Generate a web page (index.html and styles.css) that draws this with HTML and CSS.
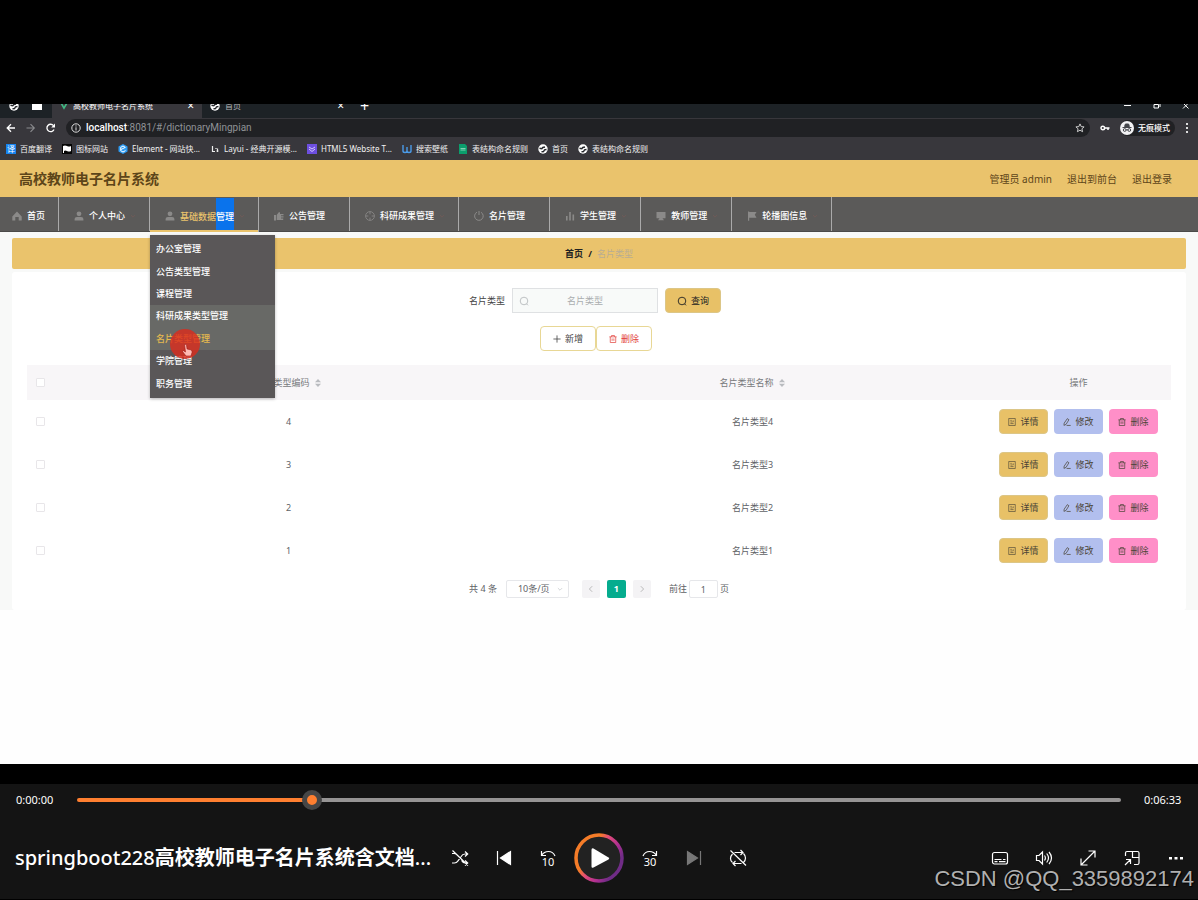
FILE: index.html
```html
<!DOCTYPE html>
<html lang="zh-CN">
<head>
<meta charset="utf-8">
<title>高校教师电子名片系统</title>
<link rel="stylesheet" href="styles.css">
</head>
<body>
<svg class="sprite" aria-hidden="true">
  <symbol id="globe" viewBox="0 0 10 10"><circle cx="5" cy="5" r="4.7" fill="#fff"/><path d="M1.500 4.200l2.300 .6 1-1.300 2.200-.5M8.500 5.500l-2 .3-1 1.700-2 .3" fill="none" stroke="#26282c" stroke-width="1.400"/></symbol>
  <symbol id="user" viewBox="0 0 10 10"><circle cx="5" cy="2.8" r="2.4"/><path d="M.6 9.4V8q0-2 2.4-2h4q2.4 0 2.4 2v1.4z"/></symbol>
  <symbol id="search" viewBox="0 0 10 10"><path d="M5 1.2a3.8 3.8 0 1 0 0 7.6a3.8 3.8 0 0 0 0-7.6M7.500 7.800L9 9.300" fill="none" stroke="currentColor" stroke-width=".9"/></symbol>
  <symbol id="trash" viewBox="0 0 10 10"><path d="M.5 2.300h9M3.200 2.300V.6h3.600v1.700M1.600 2.300v7.100h6.800v-7.100M3.900 4.300v3M6.100 4.300v3" fill="none" stroke="currentColor" stroke-width=".9"/></symbol>
  <symbol id="doc" viewBox="0 0 10 10"><path d="M.9.6h8.200v8.800H.9zM3 3h1.600M3 5h2.600M3 7h4M6.500 5.200V3" fill="none" stroke="currentColor" stroke-width=".8"/></symbol>
  <symbol id="edit" viewBox="0 0 10 10"><path d="M5.400.8l2 1.400L3.800 8 1.200 9.200l.3-2.800zM4.500 9.300h5.100" fill="none" stroke="currentColor" stroke-width=".9"/></symbol>
  <symbol id="down" viewBox="0 0 10 10"><path d="M1.500 3.500L5 7l3.500-3.500" fill="none" stroke="currentColor"/></symbol>
  <symbol id="sort" viewBox="0 0 10 10"><path d="M5 0L8.800 4H1.200zM5 10L1.200 6h7.600z"/></symbol>
</svg>

<main class="screen">
  <div class="tabs">
    <div class="tabs-inner">
      <span class="pin"><svg class="i10"><use href="#globe"/></svg></span>
      <span class="pin"><svg class="i10" viewBox="0 0 10 10"><path d="M0 1h10v8H0z" fill="#fff"/></svg></span>
      <div class="tab tab-on"><svg class="i8" viewBox="0 0 10 10"><path d="M0 1h2.4L5 5.6 7.600 1H10L5 9.600z" fill="#41b883"/></svg><span>高校教师电子名片系统</span><button class="tab-x" aria-label="关闭">×</button></div>
      <div class="tab"><svg class="i10"><use href="#globe"/></svg><span class="dim">首页</span><button class="tab-x" aria-label="关闭">×</button></div>
      <button class="tab-new" aria-label="新标签页">+</button>
      <svg class="win" viewBox="0 0 66 10"><path d="M0 4.500h7M30 3.500h4.500V7H30zM31.500 3V2H36v4M59 2l5.500 5.500M64.500 2L59 7.500" fill="none" stroke="#fff"/></svg>
    </div>
  </div>
  <div class="toolbar">
    <svg class="nav-arrows" viewBox="0 0 50 10"><path d="M9 5H1.500M5 1.200L1.200 5 5 8.800" fill="none" stroke="#fff" stroke-width="1.300"/><path d="M20.500 5H28M24.500 1.200L28.300 5l-3.800 3.800" fill="none" stroke="#8a8b8e" stroke-width="1.100"/><path d="M48 6.500A3.700 3.700 0 1 1 47.500 2.600" fill="none" stroke="#fff" stroke-width="1.300"/><path d="M49 .6V4.400h-3.800z" fill="#fff"/></svg>
    <div class="address">
      <svg class="i10" viewBox="0 0 10 10"><circle cx="5" cy="5" r="4.200" fill="none" stroke="#ddd"/><path d="M5 4.300V7.500M5 2.400v1.100" stroke="#ddd"/></svg>
      <span class="url"><b>localhost</b>:8081/#/dictionaryMingpian</span>
      <svg class="i10" viewBox="0 0 10 10"><path d="M5 .9l1.200 2.700 2.900.3-2.200 1.900.7 2.900L5 7.200 2.400 8.700l.7-2.900L.9 3.900l2.900-.3z" fill="none" stroke="#ddd" stroke-width=".9"/></svg>
    </div>
    <svg class="i10" viewBox="0 0 10 10"><circle cx="2.800" cy="5" r="1.800" fill="none" stroke="#fff" stroke-width="1.400"/><path d="M4.500 5h5M8 5v2" stroke="#fff" stroke-width="1.500"/></svg>
    <div class="incognito"><svg class="i14" viewBox="0 0 14 14"><circle cx="7" cy="7" r="7" fill="#f2f2f4"/><path d="M4.600 5.500L5.400 3h3.200l.8 2.500zM2.500 6.500h9" stroke="#44464b" fill="#44464b"/><path d="M3.300 9a1.400 1.400 0 1 0 2.800 0a1.400 1.400 0 1 0-2.800 0M7.900 9a1.400 1.400 0 1 0 2.800 0a1.400 1.400 0 1 0-2.800 0M6.100 8.800h1.800" fill="none" stroke="#44464b"/></svg><span>无痕模式</span></div>
    <svg class="dots" viewBox="0 0 4 10"><path d="M1 0h2v2H1zM1 4h2v2H1zM1 8h2v2H1z" fill="#ddd"/></svg>
  </div>
  <nav class="bookmarks">
    <a href="#"><span class="fav fav-blue">译</span>百度翻译</a>
    <a href="#"><svg class="i10" viewBox="0 0 10 10"><path d="M0 0h10v10H0z" fill="#050505"/><path d="M1 2q2-1 4 0t4 0v5q-2 1-4 0T2 7v2H1z" fill="#fff"/></svg>图标网站</a>
    <a href="#"><svg class="i10" viewBox="0 0 10 10"><path d="M5 0l4.500 2.500v5L5 10 .5 7.500v-5z" fill="#2d9cf4"/><path d="M7.500 3.500L5 2 2.700 3.400v3.300L5 8l2.500-1.400M3 5.500l4-2" fill="none" stroke="#fff"/></svg>Element - 网站快...</a>
    <a href="#"><svg class="i10" viewBox="0 0 10 10"><path d="M2.500 2v5.500H5M6 4v1M6.500 7h2M7.500 4.500V8" fill="none" stroke="#eee" stroke-width="1.200"/></svg>Layui - 经典开源模...</a>
    <a href="#"><svg class="i10" viewBox="0 0 10 10"><path d="M0 0h10v10H0z" fill="#6d4fe0"/><path d="M2 3l3 2 3-2M2 5l3 2.500L8 5" fill="none" stroke="#d5c9ff"/></svg>HTML5 Website T...</a>
    <a href="#"><svg class="i10" viewBox="0 0 10 10"><path d="M1 1v6q0 1.500 2 1.500T5 7V3v4q0 1.500 2 1.500T9 7V1" fill="none" stroke="#4b9be8" stroke-width="1.400"/></svg>搜索壁纸</a>
    <a href="#"><svg class="i10" viewBox="0 0 10 10"><path d="M1 0h6l2 2v8H1z" fill="#0b9d6c"/><path d="M2.500 6h5M2.500 4.500h5" stroke="#9fe0c5" stroke-width=".8"/></svg>表结构命名规则</a>
    <a href="#"><svg class="i10"><use href="#globe"/></svg>首页</a>
    <a href="#"><svg class="i10"><use href="#globe"/></svg>表结构命名规则</a>
  </nav>

  <header class="app-head">
    <h1>高校教师电子名片系统</h1>
    <div class="account"><span>管理员 admin</span><a href="#">退出到前台</a><a href="#">退出登录</a></div>
  </header>

  <nav class="menu">
    <a class="mi mi-home" href="#"><svg class="i10" viewBox="0 0 10 10"><path d="M5 .5L.3 5.500V9.500h3V6h3.400v3.500h3v-4z"/></svg>首页</a>
    <a class="mi" href="#"><svg class="i10"><use href="#user"/></svg>个人中心<svg class="i6"><use href="#down"/></svg></a>
    <div class="mi mi-on">
      <svg class="i10"><use href="#user"/></svg><span>基础数据<span class="picked">管理</span></span><svg class="i6"><use href="#down"/></svg>
      <div class="drop">
        <a href="#">办公室管理</a><a href="#">公告类型管理</a><a href="#">课程管理</a><a class="lit" href="#">科研成果类型管理</a><a class="lit cur" href="#">名片类型管理</a><a href="#">学院管理</a><a href="#">职务管理</a>
        <svg class="pointer" viewBox="0 0 30 30"><circle cx="15" cy="15" r="15" fill="#dc2a1c" fill-opacity=".8"/><path d="M14.500 15.500q1.500-.6 2 .8l.6 3.700 3.400.8q2 .6 1.600 2.400L21 27h-5l-3.500-4.500 1-.8 2 1.300z" fill="#ffb9b3" stroke="#9c1a12" stroke-width=".6"/></svg>
      </div>
    </div>
    <a class="mi" href="#"><svg class="i10" viewBox="0 0 10 10"><path d="M0 4h2v5.500H0zM2.700 4L5 1l1 .5V3h3.500v1.200H7v1h2.500v1.300H7v1h2.200v1.500H2.700z"/></svg>公告管理<svg class="i6"></svg></a>
    <a class="mi" href="#"><svg class="i10" viewBox="0 0 12 12"><circle cx="6" cy="6" r="5.300" fill="none" stroke="currentColor"/><path d="M6 1v3M6 8v3M1 6h3M8 6h3" stroke="currentColor"/></svg>科研成果管理<svg class="i6"><use href="#down"/></svg></a>
    <a class="mi" href="#"><svg class="i10" viewBox="0 0 10 10"><path d="M7 1.300A4.300 4.300 0 1 1 3 1.200M5 0v4" fill="none" stroke="currentColor"/></svg>名片管理<svg class="i6"></svg></a>
    <a class="mi" href="#"><svg class="i10" viewBox="0 0 10 10"><path d="M1 5h1.600v4.500H1zM4.200 1h1.600v8.500H4.200zM7.500 3.500h1.600v6H7.500z"/></svg>学生管理<svg class="i6"><use href="#down"/></svg></a>
    <a class="mi" href="#"><svg class="i10" viewBox="0 0 10 10"><path d="M.5 1h9v6.200h-3L8 9.200H2l1.500-2h-3z"/></svg>教师管理<svg class="i6"><use href="#down"/></svg></a>
    <a class="mi" href="#"><svg class="i10" viewBox="0 0 10 10"><path d="M1 .5h1.200V1H9.500L7.800 3.800 9.500 6.700H2.200v3H1z"/></svg>轮播图信息<svg class="i6"><use href="#down"/></svg></a>
  </nav>

  <section class="page">
    <div class="crumb"><b>首页</b><b>/</b><span>名片类型</span></div>
    <div class="card">
      <form class="query">
        <label for="type">名片类型</label>
        <div class="field"><svg class="i10"><use href="#search"/></svg><input id="type" type="text" placeholder="名片类型"></div>
        <button type="button" class="btn gold"><svg class="i10"><use href="#search"/></svg>查询</button>
      </form>
      <div class="ops">
        <button class="btn line"><svg class="i8" viewBox="0 0 10 10"><path d="M5 .5v9M.5 5h9" stroke="currentColor"/></svg>新增</button>
        <button class="btn line red"><svg class="i8"><use href="#trash"/></svg>删除</button>
      </div>
      <table class="grid">
        <thead><tr><th class="c-check"><input type="checkbox" aria-label="全选"></th><th class="c-code">名片类型编码<svg class="i8 sort"><use href="#sort"/></svg></th><th>名片类型名称<svg class="i8 sort"><use href="#sort"/></svg></th><th class="c-act">操作</th></tr></thead>
        <tbody>
          <tr><td><input type="checkbox" aria-label="选择4"></td><td>4</td><td>名片类型4</td><td class="c-act"><div class="acts"><button class="btn gold"><svg class="i8"><use href="#doc"/></svg>详情</button><button class="btn blue"><svg class="i8"><use href="#edit"/></svg>修改</button><button class="btn pink"><svg class="i8"><use href="#trash"/></svg>删除</button></div></td></tr>
          <tr><td><input type="checkbox" aria-label="选择3"></td><td>3</td><td>名片类型3</td><td class="c-act"><div class="acts"><button class="btn gold"><svg class="i8"><use href="#doc"/></svg>详情</button><button class="btn blue"><svg class="i8"><use href="#edit"/></svg>修改</button><button class="btn pink"><svg class="i8"><use href="#trash"/></svg>删除</button></div></td></tr>
          <tr><td><input type="checkbox" aria-label="选择2"></td><td>2</td><td>名片类型2</td><td class="c-act"><div class="acts"><button class="btn gold"><svg class="i8"><use href="#doc"/></svg>详情</button><button class="btn blue"><svg class="i8"><use href="#edit"/></svg>修改</button><button class="btn pink"><svg class="i8"><use href="#trash"/></svg>删除</button></div></td></tr>
          <tr><td><input type="checkbox" aria-label="选择1"></td><td>1</td><td>名片类型1</td><td class="c-act"><div class="acts"><button class="btn gold"><svg class="i8"><use href="#doc"/></svg>详情</button><button class="btn blue"><svg class="i8"><use href="#edit"/></svg>修改</button><button class="btn pink"><svg class="i8"><use href="#trash"/></svg>删除</button></div></td></tr>
        </tbody>
      </table>
      <div class="pager">
        <span>共 4 条</span>
        <div class="size"><select aria-label="每页条数"><option>10条/页</option></select><svg class="i6"><use href="#down"/></svg></div>
        <div class="pages">
          <button class="pg" aria-label="上一页"><svg class="i8" viewBox="0 0 10 10"><path d="M6.500 1.500L3 5l3.500 3.500" fill="none" stroke="currentColor"/></svg></button>
          <button class="pg pg-on">1</button>
          <button class="pg" aria-label="下一页"><svg class="i8" viewBox="0 0 10 10"><path d="M3.500 1.500L7 5 3.500 8.500" fill="none" stroke="currentColor"/></svg></button>
        </div>
        <label class="jump">前往<input type="text" value="1">页</label>
      </div>
    </div>
  </section>
</main>

<footer class="player">
  <div class="seek"><span>0:00:00</span><input type="range" min="0" max="1000" value="220" aria-label="进度"><span>0:06:33</span></div>
  <div class="controls">
    <div class="title">springboot228<b>高校教师电子名片系统含文档</b>...</div>
    <div class="group">
      <button aria-label="随机"><svg class="i18" viewBox="0 0 18 18"><path d="M1 14h2.500q2 0 3.500-2.200l3-4Q11.500 5 14 5h2.500M1 4.500h2.200q1.800 0 3.300 1.800M10.500 11.500Q12 14 14 14h2.500M14 2.500L16.700 5 14 7.500M14 11.500l2.700 2.500-2.700 2.500M1.500 1.500l15.500 15"/></svg></button>
      <button aria-label="上一个"><svg class="i18" viewBox="0 0 18 18"><path d="M2.500 2v14"/><path d="M15.500 2.500v13L5.500 9z" fill="#fff"/></svg></button>
      <button aria-label="后退10秒"><svg class="i18" viewBox="0 0 18 18"><path d="M2.500 2v4.500H7M2.700 6.300Q5 2.500 9.500 2.500q4.500 0 6.500 4.500"/><text x="9" y="16.500">10</text></svg></button>
      <button class="play" aria-label="播放"><svg viewBox="0 0 50 50"><defs><linearGradient id="ring" x1="0" y1="0.200" x2="1" y2="0.800"><stop offset=".3" stop-color="#f57c28"/><stop offset=".45" stop-color="#e34c78"/><stop offset=".68" stop-color="#ad2e92"/><stop offset=".85" stop-color="#702c86"/></linearGradient></defs><circle cx="25" cy="25" r="23" fill="#222" stroke="url(#ring)" stroke-width="3.500"/><path d="M17.500 17v16.500q0 2 2 1L34.500 26.500q1.500-1 0-2L19.500 15.500q-2-1-2 1.500z" fill="#fff" stroke="none"/></svg></button>
      <button aria-label="前进30秒"><svg class="i18" viewBox="0 0 18 18"><path d="M15.500 2v4.500H11M15.300 6.300Q13 2.500 8.500 2.500 4 2.500 2 7"/><text x="9" y="16.500">30</text></svg></button>
      <button aria-label="下一个"><svg class="i18 off" viewBox="0 0 18 18"><path d="M15.500 2v14"/><path d="M2.500 2.500v13l10-6.500z" fill="#777"/></svg></button>
      <button aria-label="循环"><svg class="i18" viewBox="0 0 18 18"><path d="M5.500 3.500H14M11.500 1L14 3.500 11.500 6M12.500 14.500H4M6.500 12L4 14.500 6.500 17M3.500 5Q1.500 7 1.500 9.500t2 4M14.500 4.500q2 2 2 4.500t-2 4.500M1.500 1.500l15.500 15"/></svg></button>
    </div>
    <div class="group end">
      <button aria-label="字幕"><svg class="i18" viewBox="0 0 18 18"><rect x="1.500" y="3.500" width="15" height="11.500" rx="2"/><path d="M3.500 10.500h7M12 10.500h2.500M3.500 12.700h3M8 12.700h6.500"/></svg></button>
      <button aria-label="音量"><svg class="i18" viewBox="0 0 18 18"><path d="M1.500 6.500h2.500L7.500 3v12L4 11.500H1.500zM9.500 6.500q1.800 2.500 0 5M11.700 4.500q3.600 4.500 0 9M14 3q5 6 0 12"/></svg></button>
      <button aria-label="全屏"><svg class="i18" viewBox="0 0 18 18"><path d="M2.500 15.500l13.500-13.500M9.500 2H16v6.500M2 9.500V16h6.500"/></svg></button>
      <button aria-label="小窗"><svg class="i18" viewBox="0 0 18 18"><path d="M2.500 7V4q0-1.500 1.500-1.500h10.500q1.500 0 1.500 1.500v10q0 1.500-1.500 1.500H11M9.500 2.500v6H16M2 16l5.500-5.500M3 10.500h4.500V15"/></svg></button>
      <button aria-label="更多"><svg class="i18" viewBox="0 0 18 18"><path d="M2 8h3v2.500H2zM7.500 8h3v2.500h-3zM13 8h3v2.500h-3z" fill="#fff" stroke="none"/></svg></button>
    </div>
  </div>
  <span class="mark">CSDN @QQ_3359892174</span>
</footer>
</body>
</html>
```
FILE: styles.css
```css
* { box-sizing: border-box; }
body { margin: 0; min-height: 100vh; display: flex; flex-direction: column; padding-top: 104px; background: #000; font: 9px/14px "Noto Sans", "Noto Sans CJK SC", sans-serif; color: #606266; }
a { color: inherit; text-decoration: none; }
button, input, select { font: inherit; color: inherit; margin: 0; padding: 0; border: 0; background: none; }
svg { flex: none; fill: currentColor; }
.sprite { position: absolute; width: 0; height: 0; }
.i6 { width: 6px; height: 6px; }
.i8 { width: 8px; height: 8px; }
.i10 { width: 10px; height: 10px; }
.i14 { width: 14px; height: 14px; }
.i18 { width: 18px; height: 18px; }

.screen { flex: 1; margin-bottom: 20px; background: #fefefe; }

/* browser chrome */
.tabs { height: 14px; overflow: hidden; display: flex; align-items: flex-end; background: #1d2226; color: #fff; font-size: 8px; line-height: 10px; }
.tabs-inner { flex: 1; display: flex; align-items: center; height: 24px; }
.pin { width: 25px; display: flex; justify-content: center; margin-left: 1px; }
.pin + .pin { margin: 0 3px 0 -2px; }
.tab { display: flex; align-items: center; height: 24px; width: 150px; padding: 0 8px; gap: 5px; }
.tab-on { background: #38373c; }
.tab span { flex: 1; white-space: nowrap; }
.tab-x { font-size: 12px; }
.tab-new { font-size: 16px; margin-left: 8px; }
.dim { color: #b0b2b5; }
.win { width: 66px; height: 10px; margin: 0 8px 0 auto; }
.toolbar { height: 20px; display: flex; align-items: center; padding: 0 9px 0 6px; gap: 10px; background: #38373c; color: #fff; }
.nav-arrows { width: 50px; height: 10px; }
.address { flex: 1; height: 18px; border-radius: 9px; background: #202124; display: flex; align-items: center; gap: 5px; padding: 0 5px; }
.url { flex: 1; font-family: Roboto, "Noto Sans", sans-serif; font-size: 10px; color: #8f9296; }
.url b { font-weight: 500; color: #fff; }
.incognito { display: flex; align-items: center; gap: 4px; width: 55px; height: 16px; border-radius: 8px; background: #202124; font-size: 8px; font-weight: 500; white-space: nowrap; }
.dots { width: 4px; height: 10px; }
.bookmarks { height: 22px; display: flex; align-items: center; gap: 10px; padding: 0 6px; background: #38373c; color: #f1f1f1; font-size: 8px; white-space: nowrap; }
.bookmarks a { display: flex; align-items: center; gap: 4px; }
.fav { width: 10px; line-height: 10px; text-align: center; }
.fav-blue { background: #1684f0; color: #fff; }

/* application header */
.app-head { height: 37px; display: flex; align-items: center; justify-content: space-between; padding: 0 26px 0 19px; background: #eac36c; color: #5d4519; }
.app-head h1 { margin: 0; font-size: 14px; line-height: 20px; font-weight: 600; }
.account { display: flex; gap: 15px; font-size: 10px; }
.menu { height: 35px; display: flex; background: #5b5a59; color: #fff; font-weight: 500; border-bottom: 1px solid #4b4a49; }
.mi { position: relative; display: flex; align-items: center; gap: 5px; padding: 3px 13px 0 15px; border-right: 1px solid #aaa; line-height: 31px; }
.mi > svg { color: #8b8a89; }
.mi > svg:last-of-type:not(:first-child) { color: #7d5d58; }
.mi-home { padding: 3px 13px 0 12px; }
.mi-on { color: #eac36c; height: 35px; }
.mi-on::after { content: ""; position: absolute; left: 0; right: 0; bottom: 0; height: 2px; background: #eac36c; }
.picked { display: inline-block; padding-top: 3px; margin-top: -3px; background: #0a73ec; color: #fff; }
.drop { position: absolute; z-index: 2; top: 38px; left: 0; width: 125px; height: 163px; padding: 3px 0; display: grid; grid-auto-rows: 1fr; background: #5a5758; color: #fff; box-shadow: 0 1px 3px #0004; }
.drop a { display: flex; align-items: center; padding-left: 6px; line-height: 14px; }
.lit { background: #686966; }
.drop .cur { color: #e5b94f; }
.pointer { position: absolute; left: 20px; top: 94px; width: 30px; height: 30px; }

/* page body */
.page { padding: 6px 12px 0; background: #f8f9f8; }
.crumb { height: 31px; display: flex; align-items: center; justify-content: center; gap: 5px; border-radius: 2px; background: #eac36c; color: #222; }
.crumb span { color: #b9ad93; }
.card { margin-top: 3px; padding: 16px 15px 12px; background: #fff; border-radius: 3px; }
.query { display: flex; align-items: center; justify-content: center; gap: 7px; padding-right: 8px; color: #444; }
.field { display: flex; align-items: center; width: 146px; height: 25px; padding: 0 6px; border: 1px solid #dfe1e3; background: #f8faf9; color: #b8bbbd; }
.field input { flex: 1; width: 100%; min-width: 0; padding-right: 10px; text-align: center; outline: 0; }
.field input::placeholder { color: #aaadaf; }
.btn { display: flex; align-items: center; justify-content: center; gap: 4px; height: 25px; border-radius: 4px; white-space: nowrap; color: #4a4436; }
.query .btn, .ops .btn { width: 56px; }
.gold { background: #e8c167; border: 1px solid #dcc687; }
.query .gold { color: #222; }
.blue { background: #b2bfee; }
.pink { background: #ff8fc8; }
.ops { display: flex; justify-content: center; margin: 13px 0 14px; padding-right: 6px; }
.line { border: 1px solid #e8d795; color: #444; }
.ops .red { color: #e2403a; }
.grid { width: 100%; table-layout: fixed; border-collapse: collapse; text-align: center; }
.grid th { height: 35px; padding: 0; background: #f8f6f8; font-weight: 400; color: #77797c; }
.grid td { height: 43px; padding: 0; }
.c-check { width: 27px; }
.c-code { width: 41%; }
.grid .c-act { width: 189px; padding-left: 4px; }
.sort { color: #b9bbbf; margin-left: 4px; vertical-align: -1px; }
.grid input { appearance: none; display: block; width: 9px; height: 9px; margin: 0 auto; border: 1px solid #e8e6e9; border-radius: 1px; background: #fff; }
.acts { display: flex; justify-content: center; gap: 6px; }
.acts .btn { width: 49px; }
.pager { display: flex; align-items: center; justify-content: center; margin-top: 8px; }
.size { display: flex; align-items: center; width: 63px; height: 18px; margin: 0 13px 0 9px; padding-right: 5px; border: 1px solid #e6e7ea; border-radius: 2px; color: #b7babf; }
.size select { appearance: none; flex: 1; padding-left: 11px; color: #606266; }
.pages { display: flex; gap: 7px; }
.pg { display: flex; align-items: center; justify-content: center; width: 18px; height: 18px; border-radius: 2px; background: #f4f3f5; color: #aaa; }
.pg-on { width: 19px; background: #05ac8e; color: #fff; font-weight: 700; }
.jump { display: flex; align-items: center; gap: 2px; margin-left: 18px; }
.jump input { width: 29px; height: 18px; border: 1px solid #e6e7ea; border-radius: 2px; text-align: center; }

/* video player */
.player { position: relative; padding: 6px 0 16px; background: #141414; color: #fff; border-bottom: 1px solid #000; }
.seek { display: flex; align-items: center; gap: 23px; height: 20px; padding: 0 16px; font-size: 11px; }
.seek span { width: 38px; }
.seek input { appearance: none; flex: 1; height: 4px; border-radius: 2px; background: linear-gradient(90deg, #ff7f30 22.5%, #969494 22.5%); }
.seek input::-webkit-slider-thumb { appearance: none; width: 20px; height: 20px; border-radius: 50%; border: 5px solid #464646; background: #ff7f30; }
.controls { display: grid; grid-template-columns: 1fr auto 1fr; align-items: center; margin-top: 23px; }
.title { padding-left: 15px; font-size: 20px; line-height: 28px; font-weight: 500; white-space: nowrap; min-width: 0; overflow: hidden; }
.group { display: flex; align-items: center; }
.group button { display: flex; align-items: center; justify-content: center; width: 44px; height: 44px; }
.group svg { fill: none; stroke: #fff; stroke-width: 1.2; }
.group .off { stroke: #777; }
.group text { fill: #fff; stroke: none; font-size: 11px; text-anchor: middle; }
.group .play { width: 50px; height: 50px; margin: 0 4px; }
.play svg { width: 50px; height: 50px; }
.end { justify-content: flex-end; }
.mark { position: absolute; right: 4px; bottom: 6px; font: 22px/28px "Liberation Sans", Arial, sans-serif; color: #b0b0b0; white-space: nowrap; text-shadow: 1px 1px 1px #000; }
```
